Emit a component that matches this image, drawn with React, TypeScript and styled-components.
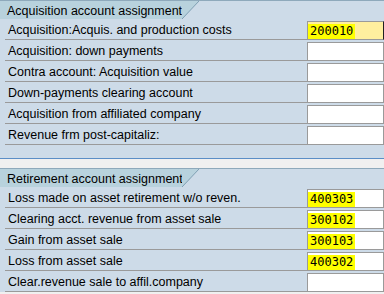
import React from 'react';
import styled, { createGlobalStyle } from 'styled-components';

const Global = createGlobalStyle`
  html, body { margin: 0; padding: 0; background: #f0f0f0; }
  body { font-family: "Liberation Sans", Arial, sans-serif; font-size: 12.5px; color: #000; }
`;

const Page = styled.div`
  width: 384px;
  height: 294px;
  overflow: hidden;
  display: flex;
  flex-direction: column;
  gap: 9px;
`;

const Section = styled.section<{ $last?: boolean }>`
  background: #cddbe8;
  border-top: 1px solid #8ea9bb;
  border-bottom: ${(p) => (p.$last ? 'none' : '1px solid #5b8ec6')};
  padding-bottom: ${(p) => (p.$last ? 0 : 13)}px;
`;

const Header = styled.div`
  height: 18px;
  display: flex;
`;

const Tab = styled.div`
  width: 182px;
  box-sizing: border-box;
  padding: 1px 0 0 7px;
  background: #b8d2dd;
  display: flex;
  align-items: center;
  white-space: nowrap;
`;

const Row = styled.div`
  display: flex;
  height: 21px;
`;

const Label = styled.div`
  flex: 1;
  margin-left: 5px;
  padding: 2px 0 0 3px;
  border-bottom: 1px solid #9a9a9a;
  display: flex;
  align-items: center;
  white-space: nowrap;
  overflow: hidden;
`;

const Field = styled.div<{ $active?: boolean }>`
  width: 77px;
  height: 19px;
  margin-top: 2px;
  box-sizing: border-box;
  border: 1px solid #9a9a9a;
  border-right-color: ${(p) => (p.$active ? '#202020' : '#9a9a9a')};
  background: ${(p) => (p.$active ? '#ffef9f' : '#ffffff')};
  display: flex;
  align-items: flex-end;
`;

const Value = styled.span`
  display: inline-block;
  height: 15px;
  line-height: 15px;
  padding: 0 2px;
  background: #ffff00;
  font-family: "DejaVu Sans Mono", "Liberation Mono", monospace;
  font-size: 12px;
`;

type Item = { label: string; value?: string };

const TabEdge = () => (
  <svg width="17" height="18" viewBox="0 0 17 18">
    <polygon points="0,0 17,0 0,18" fill="#b8d2dd" />
    <line x1="17" y1="0" x2="0" y2="18" stroke="#7f9fb3" strokeWidth="1" />
  </svg>
);

const Block = ({ title, items, last }: { title: string; items: Item[]; last?: boolean }) => (
  <Section $last={last}>
    <Header>
      <Tab>{title}</Tab>
      <TabEdge />
    </Header>
    {items.map((it, i) => (
      <Row key={i}>
        <Label>{it.label}</Label>
        <Field $active={!last && i === 0}>{it.value && <Value>{it.value}</Value>}</Field>
      </Row>
    ))}
  </Section>
);

const acq: Item[] = [
  { label: 'Acquisition:Acquis. and production costs', value: '200010' },
  { label: 'Acquisition: down payments' },
  { label: 'Contra account: Acquisition value' },
  { label: 'Down-payments clearing account' },
  { label: 'Acquisition from affiliated company' },
  { label: 'Revenue frm post-capitaliz:' },
];

const ret: Item[] = [
  { label: 'Loss made on asset retirement w/o reven.', value: '400303' },
  { label: 'Clearing acct. revenue from asset sale', value: '300102' },
  { label: 'Gain from asset sale', value: '300103' },
  { label: 'Loss from asset sale', value: '400302' },
  { label: 'Clear.revenue sale to affil.company' },
];

export default function App() {
  return (
    <>
      <Global />
      <Page>
        <Block title="Acquisition account assignment" items={acq} />
        <Block title="Retirement account assignment" items={ret} last />
      </Page>
    </>
  );
}
